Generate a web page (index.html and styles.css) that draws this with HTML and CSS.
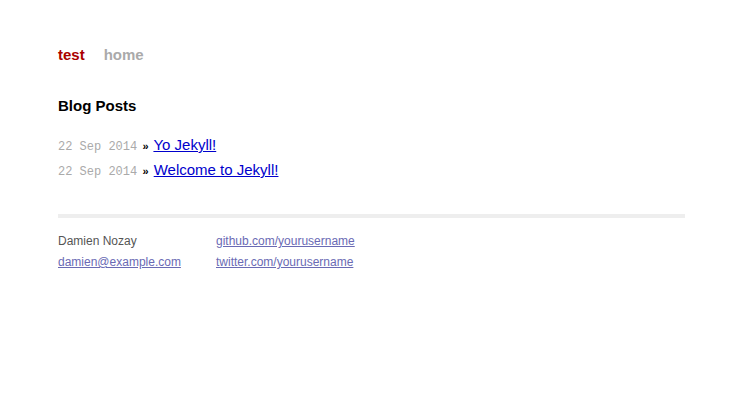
FILE: index.html
```html
<!DOCTYPE html>
<html>
<head>
<meta charset="utf-8">
<link rel="stylesheet" href="styles.css">
</head>
<body>
<div class="page">
  <nav class="nav">
    <a class="brand" href="#">test</a>
    <a class="nav-link" href="#">home</a>
  </nav>
  <h2 class="heading">Blog Posts</h2>
  <ul class="posts">
    <li><span class="date">22 Sep 2014</span> <span class="sep">»</span> <a href="#">Yo Jekyll!</a></li>
    <li><span class="date">22 Sep 2014</span> <span class="sep">»</span> <a href="#">Welcome to Jekyll!</a></li>
  </ul>
  <footer class="footer">
    <div class="col col-1">
      <div class="name">Damien Nozay</div>
      <a href="#">damien@example.com</a>
    </div>
    <div class="col">
      <a href="#">github.com/yourusername</a>
      <a href="#">twitter.com/yourusername</a>
    </div>
  </footer>
</div>
</body>
</html>
```
FILE: styles.css
```css
html, body {
  margin: 0;
  padding: 0;
  background: #fff;
}
body {
  font-family: "Liberation Sans", Arial, sans-serif;
  color: #000;
}
.page {
  width: 627px;
  margin-left: 58px;
  padding-top: 46px;
}
.nav {
  display: flex;
  gap: 19px;
  font-size: 15px;
  font-weight: bold;
  line-height: 18px;
}
.nav a { text-decoration: none; }
.brand { color: #a00; }
.nav-link { color: #aaa; }
.heading {
  margin: 33px 0 0;
  font-size: 15px;
  line-height: 18px;
  font-weight: bold;
}
.posts {
  list-style: none;
  margin: 17px 0 0;
  padding: 0;
}
.posts li {
  height: 25px;
  line-height: 25px;
  font-size: 15px;
}
.date {
  font-family: "Liberation Mono", monospace;
  font-size: 12px;
  color: #aaa;
}
.sep {
  font-weight: bold;
  font-size: 11px;
  margin: 0 1px;
}
.posts a { color: #00c; }
.footer {
  margin-top: 32px;
  border-top: 4px solid #eee;
  padding-top: 13px;
  display: flex;
  font-size: 12px;
  line-height: 21px;
}
.col { display: flex; flex-direction: column; align-items: flex-start; }
.col-1 { width: 158px; }
.name { color: #555; }
.footer a { color: #6a6ab4; }
```
